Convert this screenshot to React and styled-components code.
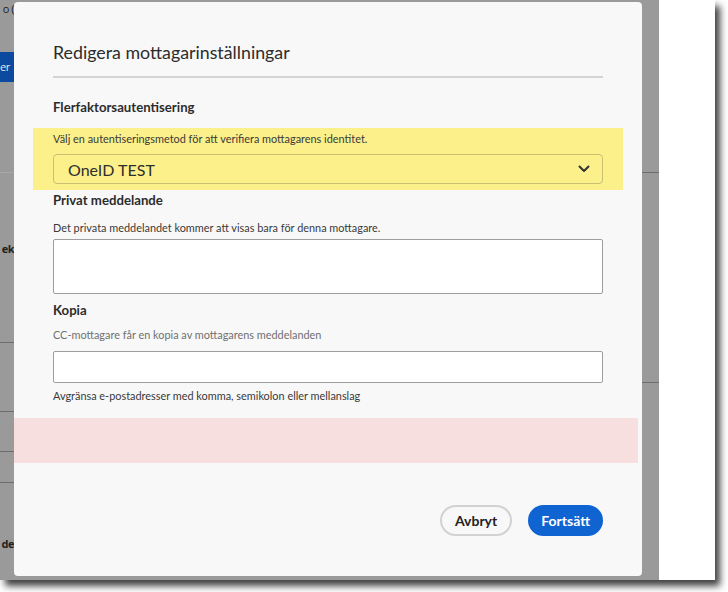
import styled, { createGlobalStyle } from "styled-components";

const GlobalStyle = createGlobalStyle`
    html, body {
        margin: 0;
        padding: 0;
        background: #ffffff;
    }
    body {
        font-family: 'Lato', 'Liberation Sans', sans-serif;
    }
`;

const Page = styled.div`
    width: 728px;
    height: 592px;
    overflow: hidden;
`;

const Frame = styled.div`
    display: flex;
    width: 715px;
    height: 580px;
    box-shadow: 5px 6px 7px rgba(0, 0, 0, 0.75);
`;

const Screen = styled.div`
    display: flex;
    align-items: flex-start;
    width: 659px;
    height: 580px;
    background: #9a9a9a;
`;

const WhiteSide = styled.div`
    flex: 1;
    background: #ffffff;
`;

const Strip = styled.div`
    display: flex;
    flex-direction: column;
    width: ${(p) => p.$width}px;
    height: 100%;
    overflow: hidden;
    font-family: 'Open Sans', sans-serif;
    font-size: 11px;
    color: #1f1f1f;
`;

const StripGap = styled.div`
    height: ${(p) => p.$h}px;
    flex-shrink: 0;
`;

const StripText = styled.div`
    height: 18px;
    line-height: 18px;
    white-space: nowrap;
    text-align: right;
    letter-spacing: -0.5px;
    font-weight: ${(p) => (p.$bold ? 700 : 400)};
`;

const StripButton = styled.div`
    height: 30px;
    line-height: 30px;
    background: #0b4a9e;
    color: #e8e8e8;
    font-size: 11px;
    letter-spacing: -0.5px;
    white-space: nowrap;
`;

const StripLine = styled.div`
    height: 1px;
    flex-shrink: 0;
    background: ${(p) => (p.$light ? "#a8a8a8" : "#6e6e6e")};
`;

const Modal = styled.div`
    display: flex;
    flex-direction: column;
    width: 628px;
    height: 574px;
    margin-top: 2px;
    box-sizing: border-box;
    padding: 38px 39px 40px;
    background: #f8f8f8;
    border-radius: 4px;
`;

const Title = styled.h2`
    margin: 0;
    font-size: 17.8px;
    line-height: 24px;
    font-weight: 400;
    color: #2c2c2c;
`;

const Divider = styled.div`
    height: 2px;
    margin-top: 12px;
    background: #d3d3d3;
`;

const Heading = styled.h3`
    margin: ${(p) => p.$top}px 0 0;
    font-size: 13.2px;
    line-height: 18px;
    font-weight: 700;
    color: #2c2c2c;
`;

const Help = styled.p`
    margin: ${(p) => p.$top}px 0 0;
    font-size: 10.9px;
    line-height: 16px;
    color: ${(p) => (p.$muted ? "#707070" : "#3a3a3a")};
`;

const Highlight = styled.div`
    margin: 12px -20px 0;
    padding: 3px 20px 6px;
    background: #fcf08a;
`;

const Select = styled.div`
    display: flex;
    align-items: center;
    justify-content: space-between;
    height: 30px;
    margin-top: 7px;
    padding: 0 12px 0 14px;
    box-sizing: border-box;
    border: 1px solid #c9bf72;
    border-radius: 4px;
    font-size: 16px;
    color: #2e2e2e;
`;

const Field = styled.div`
    height: ${(p) => p.$h}px;
    margin-top: ${(p) => p.$top}px;
    box-sizing: border-box;
    background: #ffffff;
    border: 1px solid #9e9e9e;
    border-radius: 2px;
`;

const Notice = styled.div`
    height: 45px;
    margin: 14px -35px 0 -39px;
    background: #f8dfdf;
`;

const Footer = styled.div`
    display: flex;
    justify-content: flex-end;
    gap: 16px;
    margin-top: auto;
`;

const Button = styled.button`
    height: 31px;
    padding: 0 ${(p) => (p.$primary ? 11 : 13)}px;
    border-radius: 16px;
    border: 2px solid ${(p) => (p.$primary ? "#0f64d2" : "#d2d2d2")};
    background: ${(p) => (p.$primary ? "#0f64d2" : "transparent")};
    color: ${(p) => (p.$primary ? "#ffffff" : "#222222")};
    font-family: 'Lato', sans-serif;
    font-size: 14px;
    font-weight: 700;
`;

const Chevron = () => (
    <svg width="12" height="8" viewBox="0 0 12 8" fill="none">
        <path d="M1.5 1.5 L6 6 L10.5 1.5" stroke="#333" strokeWidth="2" strokeLinecap="round" strokeLinejoin="round" />
    </svg>
);

export default function App() {
    return (
        <Page>
            <GlobalStyle />
            <Frame>
                <Screen>
                    <Strip $width={14}>
                        <StripText>o (</StripText>
                        <StripGap $h={34} />
                        <StripButton>er</StripButton>
                        <StripGap $h={90} />
                        <StripLine $light />
                        <StripGap $h={67} />
                        <StripText $bold>ek</StripText>
                        <StripGap $h={84} />
                        <StripLine />
                        <StripGap $h={68} />
                        <StripLine />
                        <StripGap $h={39} />
                        <StripLine />
                        <StripGap $h={30} />
                        <StripLine />
                        <StripGap $h={52} />
                        <StripText $bold>de</StripText>
                    </Strip>
                    <Modal>
                        <Title>Redigera mottagarinställningar</Title>
                        <Divider />
                        <Heading $top={20}>Flerfaktorsautentisering</Heading>
                        <Highlight>
                            <Help $top={0}>Välj en autentiseringsmetod för att verifiera mottagarens identitet.</Help>
                            <Select>
                                <span>OneID TEST</span>
                                <Chevron />
                            </Select>
                        </Highlight>
                        <Heading $top={1}>Privat meddelande</Heading>
                        <Help $top={11}>Det privata meddelandet kommer att visas bara för denna mottagare.</Help>
                        <Field $h={55} $top={3} />
                        <Heading $top={7}>Kopia</Heading>
                        <Help $top={8} $muted>CC-mottagare får en kopia av mottagarens meddelanden</Help>
                        <Field $h={32} $top={8} />
                        <Help $top={5}>Avgränsa e-postadresser med komma, semikolon eller mellanslag</Help>
                        <Notice />
                        <Footer>
                            <Button>Avbryt</Button>
                            <Button $primary>Fortsätt</Button>
                        </Footer>
                    </Modal>
                    <Strip $width={17}>
                        <StripGap $h={172} />
                        <StripLine />
                        <StripGap $h={209} />
                        <StripLine />
                    </Strip>
                </Screen>
                <WhiteSide />
            </Frame>
        </Page>
    );
}
